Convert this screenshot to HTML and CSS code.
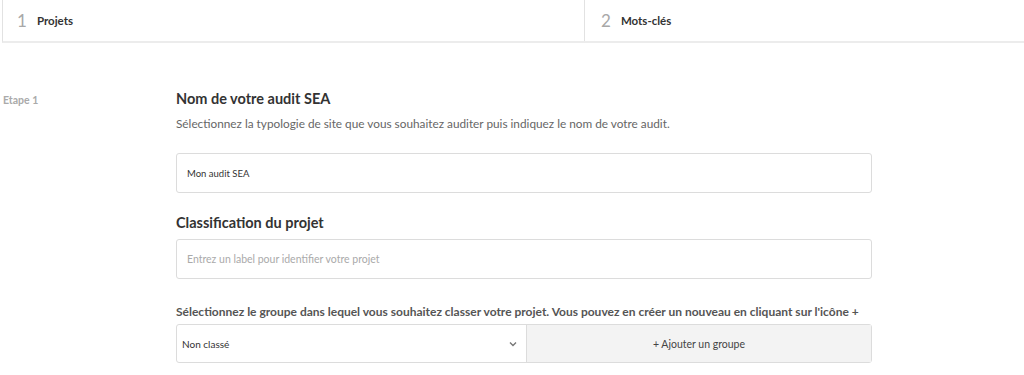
FILE: index.html
```html
<!DOCTYPE html>
<html lang="fr">
<head>
<meta charset="utf-8">
<title>Audit SEA</title>
<link rel="stylesheet" href="styles.css">
</head>
<body>
<header class="steps">
  <div class="step step-1"><span class="num">1</span><span class="name">Projets</span></div>
  <div class="step step-2"><span class="num">2</span><span class="name">Mots-clés</span></div>
</header>
<main class="page">
  <aside class="etape">Etape 1</aside>
  <section class="form">
    <h2 class="title">Nom de votre audit SEA</h2>
    <p class="desc">Sélectionnez la typologie de site que vous souhaitez auditer puis indiquez le nom de votre audit.</p>
    <div class="input">Mon audit SEA</div>
    <h2 class="title title-2">Classification du projet</h2>
    <div class="input placeholder">Entrez un label pour identifier votre projet</div>
    <p class="label">Sélectionnez le groupe dans lequel vous souhaitez classer votre projet. Vous pouvez en créer un nouveau en cliquant sur l'icône +</p>
    <div class="group-row">
      <div class="select"><span>Non classé</span>
        <svg class="chev" width="8" height="6" viewBox="0 0 8 6"><path d="M1 1.5 L4 4.5 L7 1.5" fill="none" stroke="#777" stroke-width="1.4"/></svg>
      </div>
      <div class="add">+ Ajouter un groupe</div>
    </div>
  </section>
</main>
</body>
</html>
```

FILE: styles.css
```css
* { box-sizing: border-box; }
html, body { margin: 0; padding: 0; background: #fff; }
body { font-family: "Lato", "Open Sans", sans-serif; color: #333; width: 1024px; height: 375px; overflow: hidden; }

.steps {
  display: flex;
  margin-left: 2px;
  height: 43px;
  border-left: 1px solid #e2e2e2;
  border-bottom: 2px solid #ececec;
}
.step { display: flex; align-items: center; }
.step-1 { width: 582px; border-right: 1px solid #e2e2e2; padding-left: 14px; }
.step-2 { flex: 1; padding-left: 16px; }
.num { font-size: 17px; color: #a8a8a8; font-weight: 400; margin-right: 10px; line-height: 1; }
.name { font-size: 11.5px; font-weight: 700; color: #333; }

.page { display: flex; padding-top: 46px; }
.etape { width: 176px; padding-left: 3px; font-size: 10.5px; font-weight: 700; color: #aaa; padding-top: 5px; }
.form { width: 696px; }
.title { margin: 0; font-size: 14.5px; font-weight: 700; color: #333; line-height: 18px; padding-top: 1px; }
.desc { margin: 8px 0 0; font-size: 11.8px; color: #666; line-height: 16px; }
.input {
  margin-top: 21px;
  height: 40px;
  border: 1px solid #dcdcdc;
  border-radius: 3px;
  padding-left: 10px;
  display: flex; align-items: center;
  font-size: 9.5px; color: #333;
}
.placeholder { color: #aaa; margin-top: 7px; font-size: 10.5px; }
.title-2 { margin-top: 20px; }
.label { margin: 25px 0 0; font-size: 12px; font-weight: 700; color: #555; line-height: 15px; }
.group-row { display: flex; margin-top: 5px; height: 39px; border: 1px solid #dcdcdc; border-radius: 3px; }
.select { width: 350px; display: flex; align-items: center; justify-content: space-between; padding: 0 9px 0 5px; font-size: 10px; color: #333; border-right: 1px solid #dcdcdc; }
.add { flex: 1; background: #f3f3f3; display: flex; align-items: center; justify-content: center; font-size: 10.5px; color: #444; }
```
